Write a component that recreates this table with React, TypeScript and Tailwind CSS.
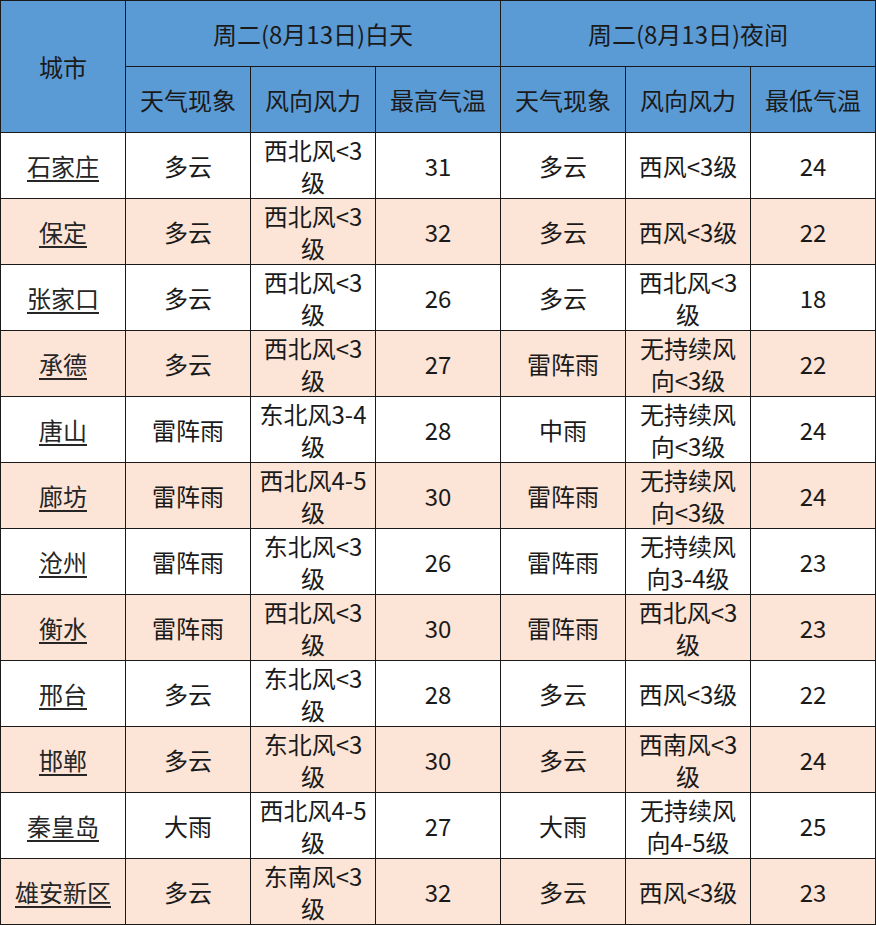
const rows = [
  ['石家庄', '多云', '西北风<3\n级', '31', '多云', '西风<3级', '24'],
  ['保定', '多云', '西北风<3\n级', '32', '多云', '西风<3级', '22'],
  ['张家口', '多云', '西北风<3\n级', '26', '多云', '西北风<3\n级', '18'],
  ['承德', '多云', '西北风<3\n级', '27', '雷阵雨', '无持续风\n向<3级', '22'],
  ['唐山', '雷阵雨', '东北风3-4\n级', '28', '中雨', '无持续风\n向<3级', '24'],
  ['廊坊', '雷阵雨', '西北风4-5\n级', '30', '雷阵雨', '无持续风\n向<3级', '24'],
  ['沧州', '雷阵雨', '东北风<3\n级', '26', '雷阵雨', '无持续风\n向3-4级', '23'],
  ['衡水', '雷阵雨', '西北风<3\n级', '30', '雷阵雨', '西北风<3\n级', '23'],
  ['邢台', '多云', '东北风<3\n级', '28', '多云', '西风<3级', '22'],
  ['邯郸', '多云', '东北风<3\n级', '30', '多云', '西南风<3\n级', '24'],
  ['秦皇岛', '大雨', '西北风4-5\n级', '27', '大雨', '无持续风\n向4-5级', '25'],
  ['雄安新区', '多云', '东南风<3\n级', '32', '多云', '西风<3级', '23'],
]

const cell = 'border border-[#1a1a1a] text-center align-middle p-0 whitespace-pre-line leading-[32px]'

export default function App() {
  return (
    <div
      className="bg-white text-[#1a1a1a] text-[24px]"
      style={{ fontFamily: '"Microsoft YaHei", "Noto Sans CJK SC", sans-serif' }}
    >
      <table className="table-fixed border-collapse w-[876px]">
        <colgroup>
          {[0, 1, 2, 3, 4, 5, 6].map((i) => (
            <col key={i} className="w-[125px]" />
          ))}
        </colgroup>
        <thead>
          <tr className="bg-[#5b9bd5] h-[66px]">
            <th rowSpan={2} className={`${cell} font-normal`}>城市</th>
            <th colSpan={3} className={`${cell} font-normal`}>周二(8月13日)白天</th>
            <th colSpan={3} className={`${cell} font-normal`}>周二(8月13日)夜间</th>
          </tr>
          <tr className="bg-[#5b9bd5] h-[66px]">
            {['天气现象', '风向风力', '最高气温', '天气现象', '风向风力', '最低气温'].map((h, i) => (
              <th key={i} className={`${cell} font-normal`}>{h}</th>
            ))}
          </tr>
        </thead>
        <tbody>
          {rows.map((r, i) => (
            <tr key={r[0]} className={`h-[66px] ${i % 2 === 1 ? 'bg-[#fce4d6]' : 'bg-white'}`}>
              {r.map((v, j) => (
                <td key={j} className={cell}>
                  {j === 0 ? <span className="underline underline-offset-4 text-[#262626]">{v}</span> : v}
                </td>
              ))}
            </tr>
          ))}
        </tbody>
      </table>
    </div>
  )
}
